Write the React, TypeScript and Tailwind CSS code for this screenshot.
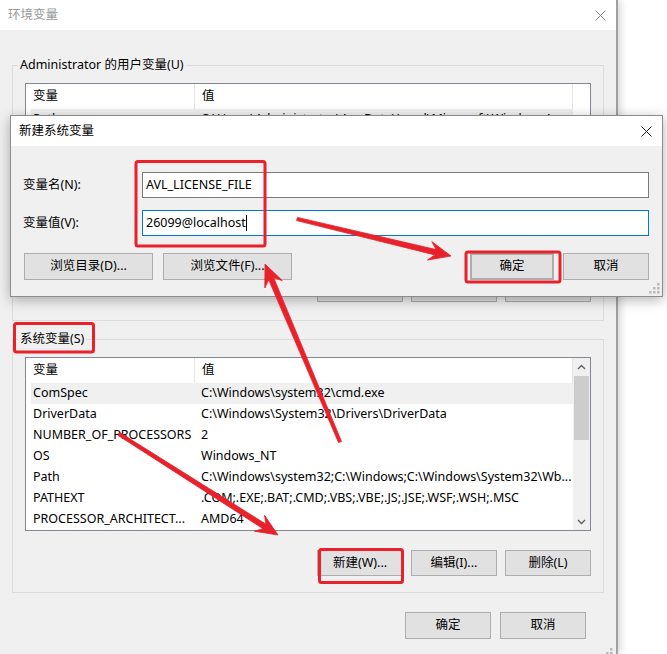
import React from 'react'

const FONT = "font-['Noto_Sans','Noto_Sans_CJK_SC',sans-serif]"

function Btn({ children, className = '' }: { children: React.ReactNode; className?: string }) {
  return (
    <div
      className={`flex items-center justify-center bg-[#e1e1e1] border border-[#adadad] text-black ${className}`}
    >
      {children}
    </div>
  )
}

function CloseIcon({ color }: { color: string }) {
  return (
    <svg width="11" height="11" viewBox="0 0 11 11">
      <path d="M0.5 0.5 L10.5 10.5 M10.5 0.5 L0.5 10.5" stroke={color} strokeWidth="1" fill="none" />
    </svg>
  )
}

function Grip() {
  const dots = [
    [8, 0],
    [8, 4],
    [4, 4],
    [8, 8],
    [4, 8],
    [0, 8],
  ]
  return (
    <svg width="11" height="11" viewBox="0 0 11 11">
      {dots.map(([x, y]) => (
        <rect key={`${x}-${y}`} x={x} y={y} width="2.5" height="2.5" fill="#b9b9b9" />
      ))}
    </svg>
  )
}

function Chevron({ up }: { up?: boolean }) {
  return (
    <svg width="9" height="6" viewBox="0 0 9 6">
      <path
        d={up ? 'M1 5 L4.5 1.5 L8 5' : 'M1 1 L4.5 4.5 L8 1'}
        stroke="#606060"
        strokeWidth="1.4"
        fill="none"
      />
    </svg>
  )
}

type Row = [string, string]

function VarList({ rows, scroll }: { rows: Row[]; scroll?: boolean }) {
  return (
    <div className="h-[174px] border border-[#828790] bg-white flex">
      <div className="w-[547px] flex flex-col">
        {/* header */}
        <div className="h-[25px] flex shrink-0 border-r border-[#e5e5e5]">
          <div className="w-[168px] pl-[7px] flex items-center">变量</div>
          <div className="flex-1 pl-[7px] flex items-center border-l border-[#e5e5e5]">值</div>
        </div>
        <div className="pl-[5px]">
          {rows.map(([k, v], i) => (
            <div key={k} className={`h-[21px] flex items-center whitespace-nowrap ${i === 0 ? 'bg-[#f0f0f0]' : ''}`}>
              <div className="w-[163px] pl-[2px] overflow-hidden">{k}</div>
              <div className="flex-1 pl-[7px] overflow-hidden">{v}</div>
            </div>
          ))}
        </div>
      </div>
      {scroll ? (
        <div className="flex-1 bg-[#f0f0f0] flex flex-col items-center">
          <div className="h-[17px] w-full flex items-center justify-center">
            <Chevron up />
          </div>
          <div className="h-[64px] w-[15px] bg-[#cdcdcd] mt-[1px]" />
          <div className="flex-1" />
          <div className="h-[17px] w-full flex items-center justify-center">
            <Chevron />
          </div>
        </div>
      ) : (
        <div className="flex-1" />
      )}
    </div>
  )
}

function Group({ label, rows, scroll, pb }: { label: string; rows: Row[]; scroll?: boolean; pb: string }) {
  return (
    <fieldset className="border border-[#dcdcdc] min-w-0">
      <legend className="ml-[5px] px-[2px] leading-[16px]">{label}</legend>
      <div className={`px-[12px] pt-[10px] ${pb}`}>
        <VarList rows={rows} scroll={scroll} />
        <div className="mt-[19px] h-[26px] flex justify-end gap-[8px]">
          <Btn className="w-[86px]">新建(W)...</Btn>
          <Btn className="w-[86px]">编辑(I)...</Btn>
          <Btn className="w-[86px]">删除(L)</Btn>
        </div>
      </div>
    </fieldset>
  )
}

const userRows: Row[] = [
  ['Path', 'C:\\Users\\Administrator\\AppData\\Local\\Microsoft\\WindowsApps;'],
  ['TEMP', 'C:\\Users\\Administrator\\AppData\\Local\\Temp'],
  ['TMP', 'C:\\Users\\Administrator\\AppData\\Local\\Temp'],
]

const sysRows: Row[] = [
  ['ComSpec', 'C:\\Windows\\system32\\cmd.exe'],
  ['DriverData', 'C:\\Windows\\System32\\Drivers\\DriverData'],
  ['NUMBER_OF_PROCESSORS', '2'],
  ['OS', 'Windows_NT'],
  ['Path', 'C:\\Windows\\system32;C:\\Windows;C:\\Windows\\System32\\Wb...'],
  ['PATHEXT', '.COM;.EXE;.BAT;.CMD;.VBS;.VBE;.JS;.JSE;.WSF;.WSH;.MSC'],
  ['PROCESSOR_ARCHITECT...', 'AMD64'],
]

function arrow(tx: number, ty: number, px: number, py: number) {
  const dx = px - tx
  const dy = py - ty
  const len = Math.hypot(dx, dy)
  const ux = dx / len
  const uy = dy / len
  const nx = -uy
  const ny = ux
  const L = 22
  const W = 9.5
  const notch = 16
  const w0 = 1.6
  const w1 = 2.7
  const bx = px - ux * L
  const by = py - uy * L
  const jx = px - ux * notch
  const jy = py - uy * notch
  const pts = [
    [tx + nx * w0, ty + ny * w0],
    [jx + nx * w1, jy + ny * w1],
    [bx + nx * W, by + ny * W],
    [px, py],
    [bx - nx * W, by - ny * W],
    [jx - nx * w1, jy - ny * w1],
    [tx - nx * w0, ty - ny * w0],
  ]
  return pts.map((p) => p.map((n) => n.toFixed(1)).join(',')).join(' ')
}

const RED = '#e8212b'

function Annotations() {
  return (
    <svg className="absolute inset-0 pointer-events-none" width="667" height="654" viewBox="0 0 667 654">
      <g fill="none" stroke={RED} strokeWidth="3">
        <rect x="136" y="161.5" width="129" height="84.5" rx="2" />
        <rect x="466" y="252" width="94" height="30" rx="2" />
        <rect x="14.5" y="323.5" width="79" height="28.5" rx="2" />
        <rect x="319.5" y="549.5" width="83" height="33" rx="2" />
      </g>
      <g fill={RED} stroke={RED} strokeWidth="0.8" strokeLinejoin="round">
        <polygon points={arrow(297, 219, 451, 256)} />
        <polygon points={arrow(340, 442, 265, 264)} />
        <polygon points={arrow(119, 434, 278, 535)} />
      </g>
    </svg>
  )
}

export default function App() {
  return (
    <div className={`relative w-[667px] h-[654px] overflow-hidden bg-white text-[12.5px] text-black ${FONT}`}>
      {/* 环境变量 main window */}
      <div className="relative w-[618px] h-[654px] flex flex-col bg-[#f0f0f0] border-r-2 border-[#a0a0a0] shadow-[2px_0_8px_rgba(0,0,0,0.18)]">
        <div className="h-[30px] shrink-0 bg-white flex items-center justify-between pl-[8px] pr-[10px] text-[#999999]">
          <span>环境变量</span>
          <CloseIcon color="#8a8a8a" />
        </div>
        <div className="px-[12px] flex flex-col">
          <div className="mt-[27px]">
            <Group label="Administrator 的用户变量(U)" rows={userRows} pb="pb-[18px]" />
          </div>
          <div className="mt-[10px]">
            <Group label="系统变量(S)" rows={sysRows} scroll pb="pb-[16px]" />
          </div>
          <div className="mt-[19px] pr-[18px] flex justify-end gap-[9px]">
            <Btn className="w-[86px] h-[27px]">确定</Btn>
            <Btn className="w-[86px] h-[27px]">取消</Btn>
          </div>
        </div>
        <div className="absolute right-[3px] bottom-[-5px]">
          <Grip />
        </div>
      </div>

      {/* 新建系统变量 dialog */}
      <div className="absolute left-[10px] top-[115px] w-[653px] h-[182px] flex flex-col bg-[#f0f0f0] border border-[#8c8c8c] shadow-[0_3px_12px_rgba(0,0,0,0.3)]">
        <div className="h-[30px] shrink-0 bg-white flex items-center justify-between pl-[8px] pr-[10px]">
          <span>新建系统变量</span>
          <CloseIcon color="#1a1a1a" />
        </div>
        <div className="pt-[26px] pl-[12px] pr-[13px] flex flex-col">
          <div className="h-[26px] flex items-center">
            <div className="w-[119px]">变量名(N):</div>
            <div className="flex-1 h-[26px] bg-white border border-[#7a7a7a] pl-[3px] flex items-center">
              AVL_LICENSE_FILE
            </div>
          </div>
          <div className="mt-[12px] h-[26px] flex items-center">
            <div className="w-[119px]">变量值(V):</div>
            <div className="flex-1 h-[26px] bg-white border border-[#0078d7] pl-[3px] flex items-center">
              <span>26099@localhost</span>
              <span className="w-[1px] h-[16px] bg-black" />
            </div>
          </div>
          <div className="mt-[17px] h-[27px] flex">
            <Btn className="ml-[1px] w-[129px]">浏览目录(D)...</Btn>
            <Btn className="ml-[10px] w-[129px]">浏览文件(F)...</Btn>
            <div className="ml-auto flex gap-[9px]">
              <Btn className="w-[84px] border-2 border-[#0078d7]">确定</Btn>
              <Btn className="w-[86px]">取消</Btn>
            </div>
          </div>
        </div>
        <div className="absolute right-[2px] bottom-[2px]">
          <Grip />
        </div>
      </div>

      <Annotations />
    </div>
  )
}
